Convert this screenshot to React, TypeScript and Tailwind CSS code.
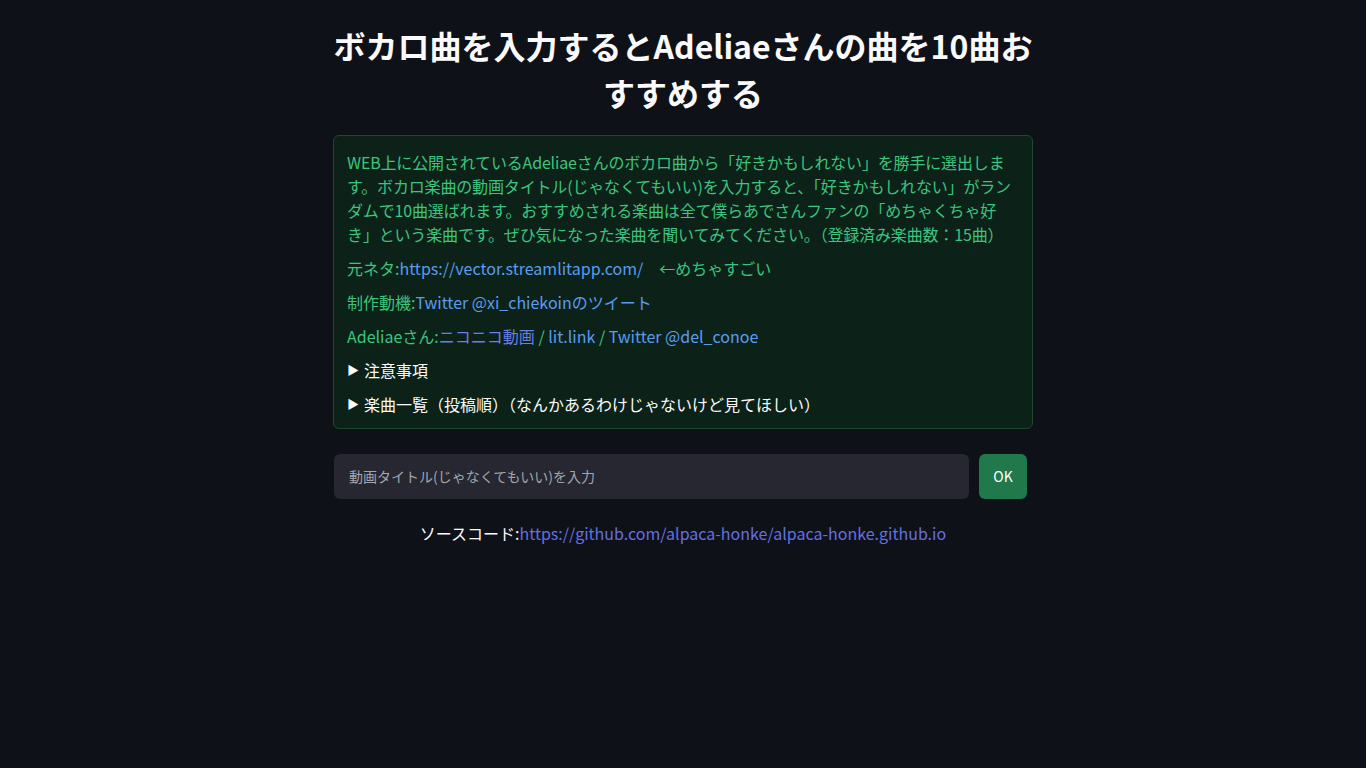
const font = { fontFamily: '"Noto Sans CJK JP", "Noto Sans", sans-serif' };

const App = () => {
    return (
        <div className="min-h-screen bg-[#0e1117] text-white" style={font}>
            <div className="w-[700px] mx-auto pt-[22px]">
                {/* Title */}
                <h1 className="text-[32px] font-bold leading-[47px] text-center text-[#fafafa]">
                    ボカロ曲を入力するとAdeliaeさんの曲を10曲おすすめする
                </h1>

                {/* Info box */}
                <div className="mt-[19px] rounded-md border border-[#1a4a2c] bg-[#0c2219] pl-[13px] pr-[14px] pt-[14px] pb-[12px] text-[16px] leading-[24px] text-[#3dc47e]">
                    <p className="tracking-[-0.16px]">
                        WEB上に公開されているAdeliaeさんのボカロ曲から「好きかもしれない」を勝手に選出します。ボカロ楽曲の動画タイトル(じゃなくてもいい)を入力すると、「好きかもしれない」がランダムで10曲選ばれます。おすすめされる楽曲は全て僕らあでさんファンの「めちゃくちゃ好き」という楽曲です。ぜひ気になった楽曲を聞いてみてください。（登録済み楽曲数：15曲）
                    </p>
                    <p className="mt-[10px]">
                        元ネタ:<span className="text-[#5b9cf0]">https://vector.streamlitapp.com/</span>　←めちゃすごい
                    </p>
                    <p className="mt-[10px]">
                        制作動機:<span className="text-[#5b9cf0]">Twitter @xi_chiekoinのツイート</span>
                    </p>
                    <p className="mt-[10px]">
                        Adeliaeさん:<span className="text-[#6a7ee8]">ニコニコ動画</span> / <span className="text-[#5b9cf0]">lit.link</span> / <span className="text-[#5b9cf0]">Twitter @del_conoe</span>
                    </p>
                    <div className="mt-[10px] flex items-center text-[#fafafa]">
                        <span className="text-[12px] w-[17px]">▶</span>
                        <span>注意事項</span>
                    </div>
                    <div className="mt-[10px] flex items-center text-[#fafafa]">
                        <span className="text-[12px] w-[17px]">▶</span>
                        <span>楽曲一覧（投稿順）（なんかあるわけじゃないけど見てほしい）</span>
                    </div>
                </div>

                {/* Input row */}
                <div className="mt-[25px] flex gap-[10px] px-px">
                    <div className="flex-1 h-[45px] rounded-md bg-[#262730] flex items-center px-[15px] text-[14px] text-[#a3a5ad]">
                        動画タイトル(じゃなくてもいい)を入力
                    </div>
                    <button className="w-[48px] h-[45px] rounded-md bg-[#21784a] text-[14px] text-white mr-[5px]">
                        OK
                    </button>
                </div>

                {/* Footer */}
                <p className="mt-[22px] text-center text-[16px] leading-[24px] text-[#fafafa]">
                    ソースコード:<span className="text-[#6470e0]">https://github.com/alpaca-honke/alpaca-honke.github.io</span>
                </p>
            </div>
        </div>
    );
};

export default App;
